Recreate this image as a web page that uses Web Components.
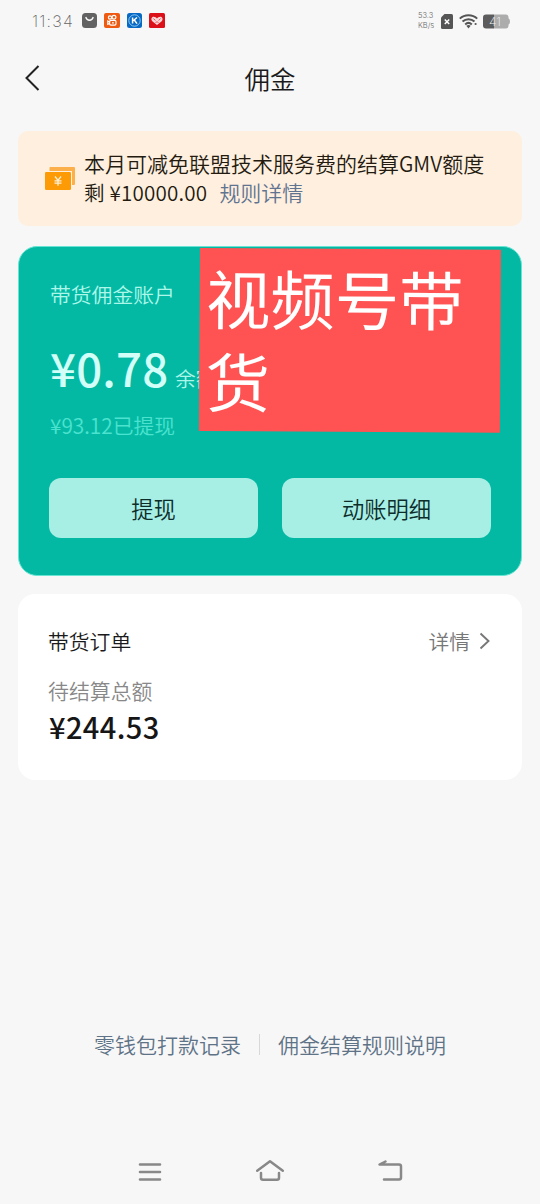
<!DOCTYPE html>
<html lang="zh-CN">
<head>
<meta charset="utf-8">
<title>佣金</title>
<style>
html,body{margin:0;padding:0}
body{width:540px;height:1204px;overflow:hidden;background:#f7f7f7;color:#1a1a1a;font-family:"Noto Sans CJK SC",sans-serif;font-size:21px;font-weight:350}
</style>
</head>
<body>
<commission-page></commission-page>
<script>
const define = (name, html) => {
  const t = document.createElement('template');
  t.innerHTML = html;
  customElements.define(name, class extends HTMLElement {
    constructor() {
      super();
      this.attachShadow({ mode: 'open' }).appendChild(t.content.cloneNode(true));
    }
  });
};

define('status-bar', `
<style>
:host{display:flex;height:42px;box-sizing:border-box;padding:0 30px 0 32px;align-items:center;justify-content:space-between;color:#666}
.l,.r{display:flex;align-items:center}
.time{font:200 16px/20px Inter,sans-serif;width:50px;white-space:nowrap;letter-spacing:1.2px}
.l svg{margin-right:7px;position:relative;top:-.5px}
.speed{font:300 7.500px/10px Inter,sans-serif;width:23px;white-space:nowrap}
svg{display:block}
</style>
<div class="l">
  <span class="time">11:34</span>
  <svg width="15" height="15" viewBox="0 0 15 15"><rect width="15" height="15" rx="3.5" fill="#626262"/><path d="M4 4.6c1 3.4 6 3.4 7 0" fill="none" stroke="#fff" stroke-width="1.5" stroke-linecap="round"/></svg>
  <svg width="16" height="15" viewBox="0 0 16 15"><rect width="16" height="15" rx="2" fill="#ee5a12"/><g fill="none" stroke="#fff" stroke-width="1.2"><circle cx="6" cy="4.5" r="1.6"/><circle cx="10" cy="4.3" r="1.9"/><rect x="5.6" y="7.4" width="6.4" height="4.8" rx="1.4"/><path d="M5.6 9 3.8 8v3.4l1.8-.9M8 9.8h1.8"/></g></svg>
  <svg width="15" height="15" viewBox="0 0 15 15"><rect width="15" height="15" rx="2.5" fill="#0869c4"/><circle cx="7.5" cy="7.5" r="5.7" fill="none" stroke="#9cd3f5" stroke-width=".9"/><path d="M5.6 4.4v6.2M10 4.5 6.2 7.7M7.3 7 10 10.6" fill="none" stroke="#fff" stroke-width="1.5"/></svg>
  <svg width="16" height="15" viewBox="0 0 16 15"><rect width="16" height="15" rx="1.5" fill="#dc1018"/><path d="M8 12 3.3 8.3C1.700 6.500 2.500 3.800 4.700 3.800 6 3.800 7.200 4.600 8 5.600 8.800 4.600 10 3.800 11.300 3.800c2.200 0 3 2.700 1.400 4.500Z" fill="#ffd6d6"/><path d="m4.500 5.500 1.800 2M11.500 5.500l-1.800 2M6.500 10 8 8.500l1.500 1.500" fill="none" stroke="#dc1018" stroke-width=".7"/></svg>
</div>
<div class="r">
  <div class="speed">53.3<br>KB/s</div>
  <svg width="12" height="15" viewBox="0 0 12 15"><path d="M3.500 0H10.500Q12 0 12 1.500V13.500Q12 15 10.500 15H1.500Q0 15 0 13.500V3.500Z" fill="#555"/><path d="m3.800 5.500 4.400 4.600m0-4.600-4.400 4.600" stroke="#fff" stroke-width="1.500"/></svg>
  <svg style="margin-left:6px" width="19" height="16" viewBox="0 0 19 16"><g fill="none" stroke="#555" stroke-width="2"><path d="M.8 5.600c4.800-4.600 12.600-4.600 17.400 0M3.500 8.600c3.400-3.200 8.600-3.200 12 0M6.200 11.400c2-1.800 4.600-1.800 6.600 0"/></g><path d="M7.300 12.800q2.200-1.500 4.400 0L9.500 15.400Z" fill="#555"/><circle cx="16.600" cy="11" r="1.100" fill="#555"/></svg>
  <svg style="margin-left:5px" width="27" height="15" viewBox="0 0 27 15"><path d="M11 .5h12q2 0 2.400 2l.2 2q1.400.7 1.400 3t-1.400 3l-.2 2q-.4 2-2.400 2H11Z" fill="#acacac"/><path d="M11 .5H3Q0 .5 0 3.500v8q0 3 3 3h8Z" fill="#5c5c5c"/><text x="6" y="12" font-family="Inter" font-size="12" font-weight="200" fill="#f4f4f4">41</text></svg>
</div>`);

define('nav-header', `
<style>
:host{display:grid;grid-template-columns:60px 1fr 60px;height:76px;align-items:center}
h1{margin:0;text-align:center;font-weight:inherit;font-size:25.500px;line-height:36px;position:relative;top:-2px}
svg{display:block;margin:-4px 0 0 23px}
</style>
<svg width="17" height="28" viewBox="0 0 17 28"><path d="M15.500 2 3.500 14 15.500 26" fill="none" stroke="#222" stroke-width="2"/></svg>
<h1><slot></slot></h1>`);

define('quota-notice', `
<style>
:host{display:flex;box-sizing:border-box;height:95px;margin:13px 18px 0;border-radius:10px;background:#ffefdf;padding:18px 0 0 27px}
svg{display:block;margin-top:17px;flex:none}
div{margin-left:8px;font-size:21px;line-height:29px;color:#231a10;white-space:nowrap}
.m{font-size:20.600px;letter-spacing:.2px}
.k{color:#5f7490;margin-left:12px}
</style>
<svg width="31" height="25" viewBox="0 0 31 25"><path d="M5 1h24q1 0 1 1v16q0 1-1 1h-2V5H4.500V2Q4.500 1 5 1Z" fill="#fcb04c"/><rect x="0" y="6" width="26" height="18" rx="1.200" fill="#fd9b07"/><path d="m10 10.500 3 3.800 3-3.800M13 14.300v5.500M9.500 14.800h7M9.500 17.200h7" fill="none" stroke="#fff1d8" stroke-width="1.300"/></svg>
<div><span>本月可减免联盟技术服务费的结算GMV额度</span><br><span class="m">剩 ¥10000.00</span><span class="k">规则详情</span></div>`);

define('soft-button', `
<style>
:host{display:flex;height:60px;border-radius:12px;background:#a7eee5;align-items:center;justify-content:center;font-size:22.300px;line-height:32px;color:#0c2d29}
</style><slot></slot>`);

define('red-label', `
<style>
:host{display:block;box-sizing:border-box;width:301px;height:183px;background:#ff5252;color:#fff;font-size:64.300px;font-weight:400;line-height:83px;padding:7px 30px 0 6.500px;transform:rotate(.35deg);transform-origin:0 0}
</style><slot></slot>`);

define('wallet-card', `
<style>
:host{display:block;position:relative;box-sizing:border-box;height:330px;margin:20px 18px 0;border-radius:19px;background:#04b9a4;border:1.500px solid #67e5d2;padding:31px 30px 0 31px}
.n{font-size:20.800px;line-height:32px;color:#adf7ea}
.b{display:flex;align-items:baseline;margin-top:29px;line-height:56px;height:56px;color:#d2fff7;white-space:nowrap}
.v{font-size:45.500px;font-weight:500;width:125px;flex:none;letter-spacing:.2px}
.u{font-size:20.700px;color:#adf7ea}
.w{font-size:20.800px;line-height:30px;margin-top:15px;color:#4be3cf}
.g{display:grid;grid-template-columns:1fr 1fr;gap:24px;margin:38px 0 0 -1px}
red-label{position:absolute;left:181px;top:1px}
</style>
<div class="n">带货佣金账户</div>
<div class="b"><span class="v">¥0.78</span><span class="u">余额</span></div>
<div class="w">¥93.12已提现</div>
<div class="g"><soft-button>提现</soft-button><soft-button>动账明细</soft-button></div>
<red-label>视频号带货</red-label>`);

define('orders-card', `
<style>
:host{display:block;box-sizing:border-box;height:186px;margin:18px 18px 0;border-radius:17px;background:#fff;padding:31px 31px 0 30px}
.h{display:flex;justify-content:space-between;line-height:32px;font-size:20.800px}
.d{display:flex;align-items:center;color:#777;gap:9px}
.s{font-size:20.900px;line-height:30px;margin-top:18px;color:#888}
.v{font-size:29px;font-weight:500;line-height:40px;margin:1px 0 0 1px;color:#161616;letter-spacing:.4px}
svg{display:block}
</style>
<div class="h"><span>带货订单</span><span class="d">详情<svg width="12" height="18" viewBox="0 0 12 18"><path d="m1.500 1.500 8 7.500-8 7.500" fill="none" stroke="#777" stroke-width="1.900"/></svg></span></div>
<div class="s">待结算总额</div>
<div class="v">¥244.53</div>`);

define('footer-links', `
<style>
:host{display:flex;align-items:center;justify-content:center;height:32px;font-size:21px;color:#5f7387;margin-top:auto}
i{width:1px;height:21px;background:#d8d8d8;margin:0 18px}
</style>
<span>零钱包打款记录</span><i></i><span>佣金结算规则说明</span>`);

define('system-nav', `
<style>
:host{display:grid;grid-template-columns:120px 120px 120px;justify-content:center;align-items:center;justify-items:center;height:64px;margin-top:80px}
svg{display:block}
</style>
<svg width="30" height="30" viewBox="0 0 30 30"><path d="M5 7.500h20M5 15h20M5 22.500h20" stroke="#888" stroke-width="2.600" stroke-linecap="round"/></svg>
<svg width="30" height="30" viewBox="0 0 30 30"><g fill="none" stroke="#888" stroke-width="2.500" stroke-linecap="round" stroke-linejoin="round"><path d="M2.200 13.800 15 4.200l12.800 9.600"/><path d="M6 16v4.700q0 2 2 2h14q2 0 2-2V16"/></g></svg>
<svg width="30" height="30" viewBox="0 0 30 30"><g fill="none" stroke="#888" stroke-width="2.500" stroke-linecap="round" stroke-linejoin="round"><path d="M10.500 4.500 4.500 7.500H24q2 0 2 2v11q0 2-2 2H9"/></g></svg>`);

define('commission-page', `
<style>:host{display:flex;flex-direction:column;width:540px;height:1204px}</style>
<status-bar></status-bar>
<nav-header>佣金</nav-header>
<quota-notice></quota-notice>
<wallet-card></wallet-card>
<orders-card></orders-card>
<footer-links></footer-links>
<system-nav></system-nav>`);
</script>
</body>
</html>
